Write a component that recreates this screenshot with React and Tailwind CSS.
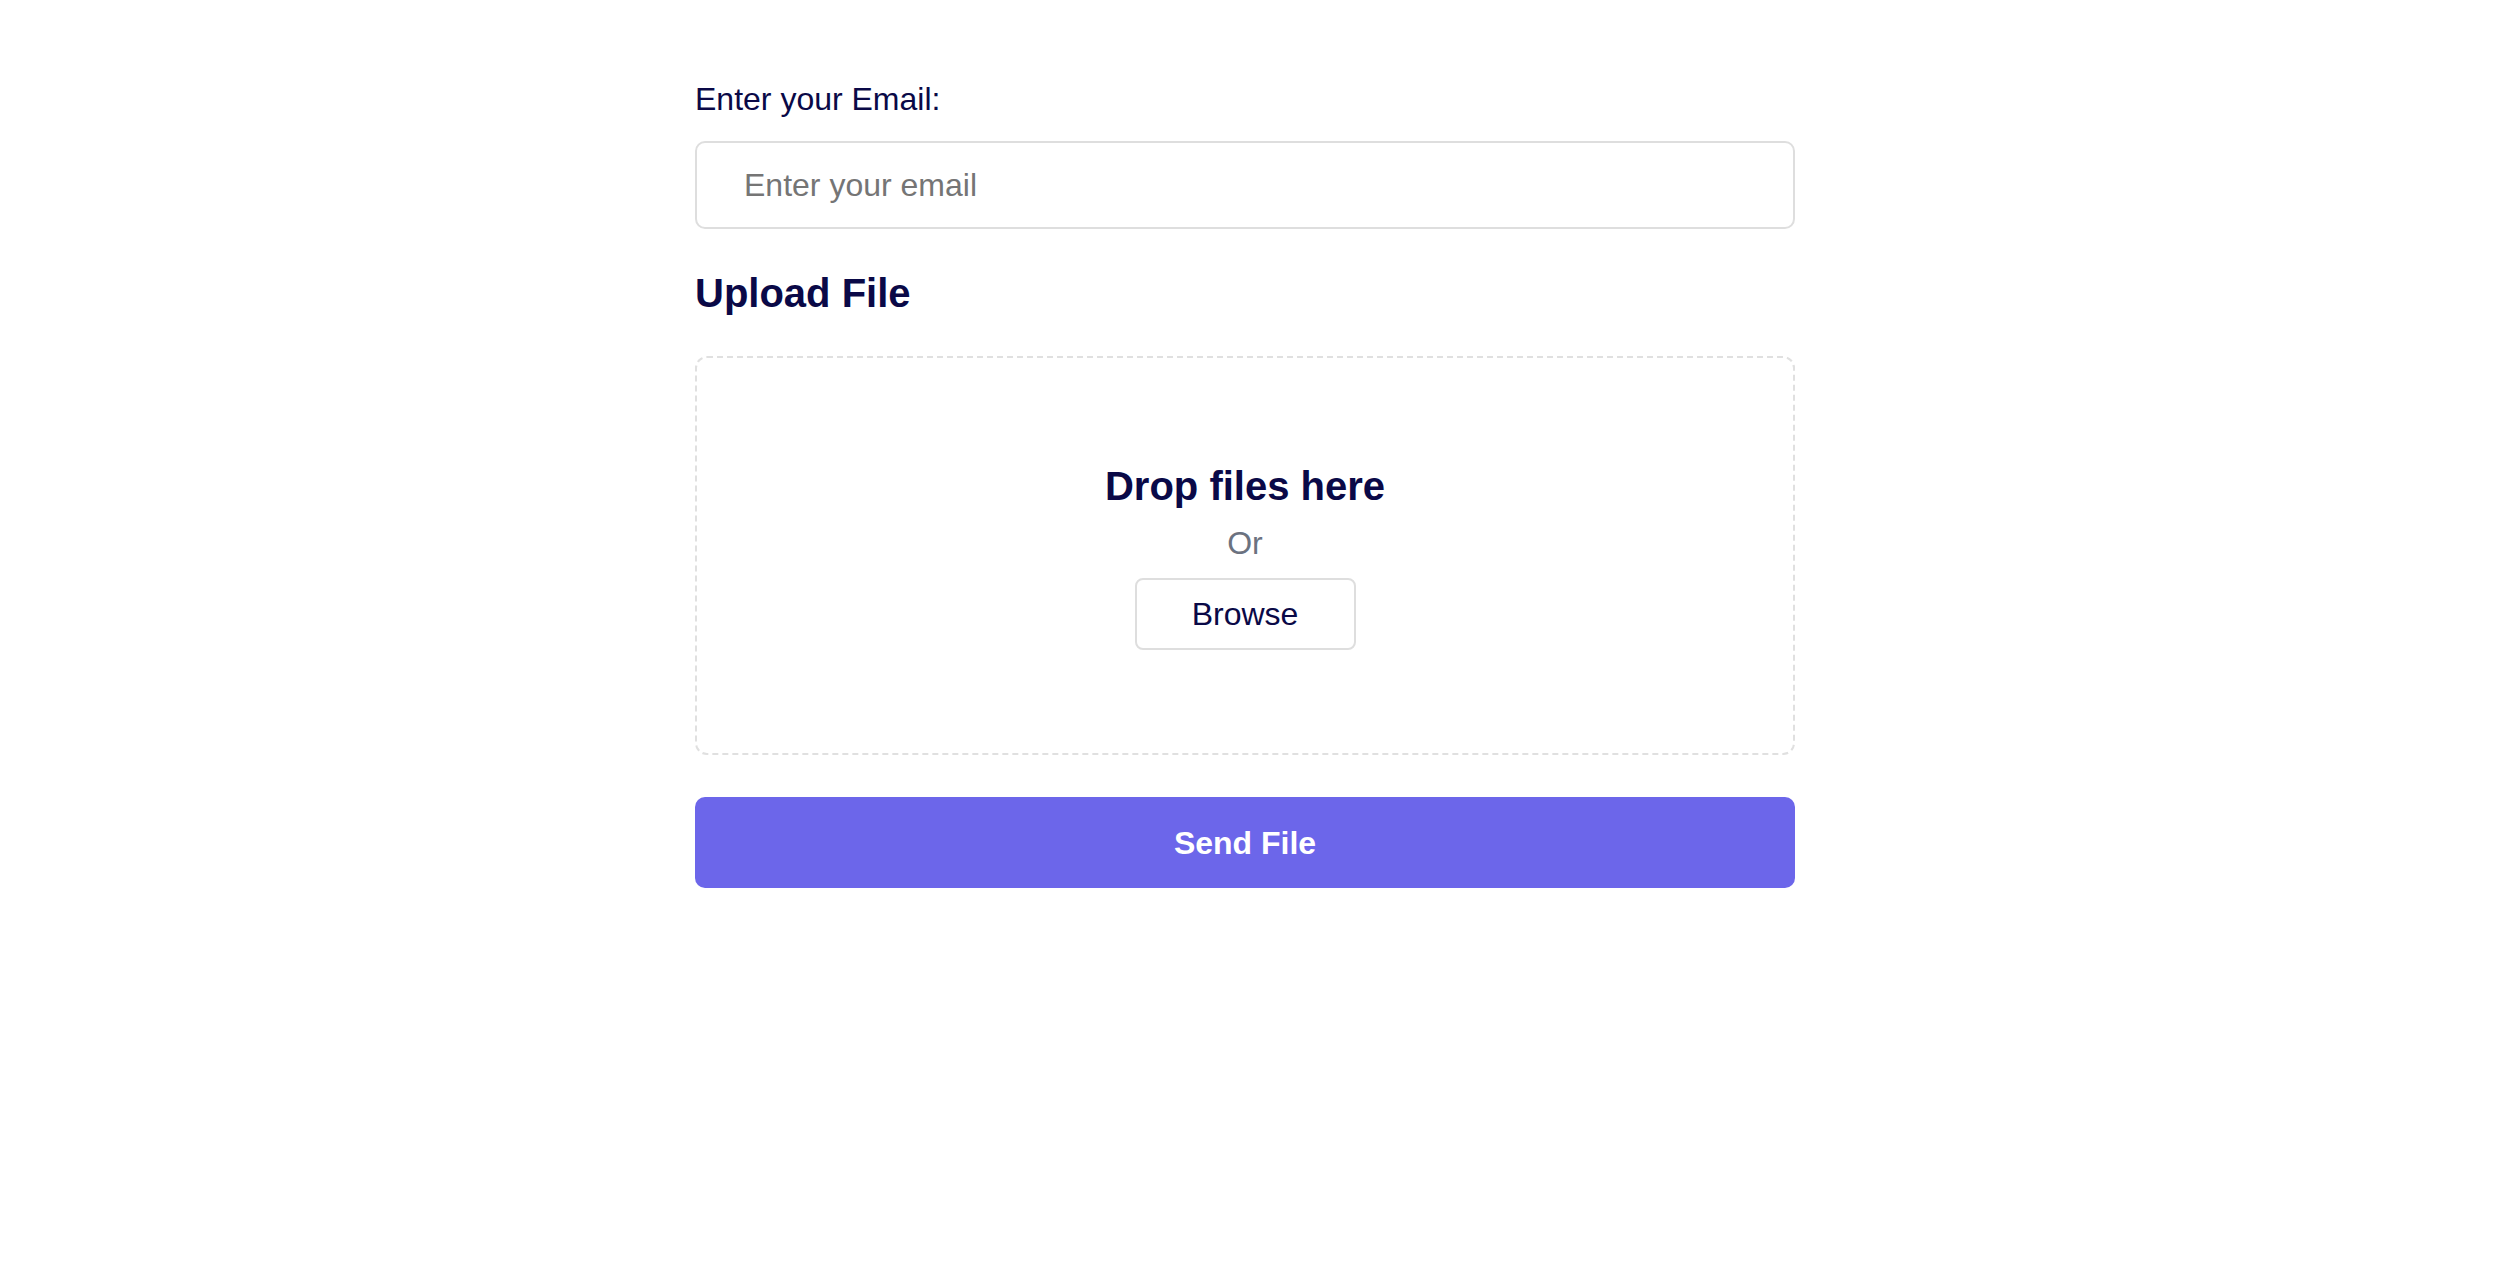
import { useState } from "react"

const font = { fontFamily: '"Liberation Sans", Arial, Helvetica, sans-serif' }

const App = () => {
  const [email, setEmail] = useState("")

  return (
    <div className="flex min-h-screen justify-center bg-white pr-[4px]" style={font}>
      <div className="w-[1100px] pt-[75px]">
        <label htmlFor="email" className="block text-[32px] leading-[48px] text-[#0a0947]">
          Enter your Email:
        </label>
        <input
          id="email"
          type="email"
          value={email}
          onChange={(e) => setEmail(e.target.value)}
          placeholder="Enter your email"
          className="mt-[18px] block h-[88px] w-full rounded-[10px] border-2 border-[#dedede] pl-[47px] text-[32px] text-[#0a0947] outline-none placeholder:text-[#757575]"
        />

        <h2 className="mt-[40px] text-[40px] font-bold leading-[48px] text-[#0a0947]">Upload File</h2>

        {/* drop zone */}
        <div className="mt-[39px] flex h-[399px] flex-col items-center justify-center rounded-[12px] border-2 border-dashed border-[#e0e0e0]">
          <p className="text-[40px] font-bold leading-[48px] text-[#0a0947]">Drop files here</p>
          <p className="mt-[9px] text-[32px] leading-[48px] text-[#6b7280]">Or</p>
          <button
            type="button"
            className="mt-[11px] h-[72px] w-[221px] rounded-[8px] border-2 border-[#dedede] bg-white text-[32px] text-[#0a0947]"
          >
            Browse
          </button>
        </div>

        <button
          type="button"
          className="mt-[42px] h-[91px] w-full rounded-[10px] bg-[#6c66ea] text-[32px] font-bold text-white"
        >
          Send File
        </button>
      </div>
    </div>
  )
}

export default App
